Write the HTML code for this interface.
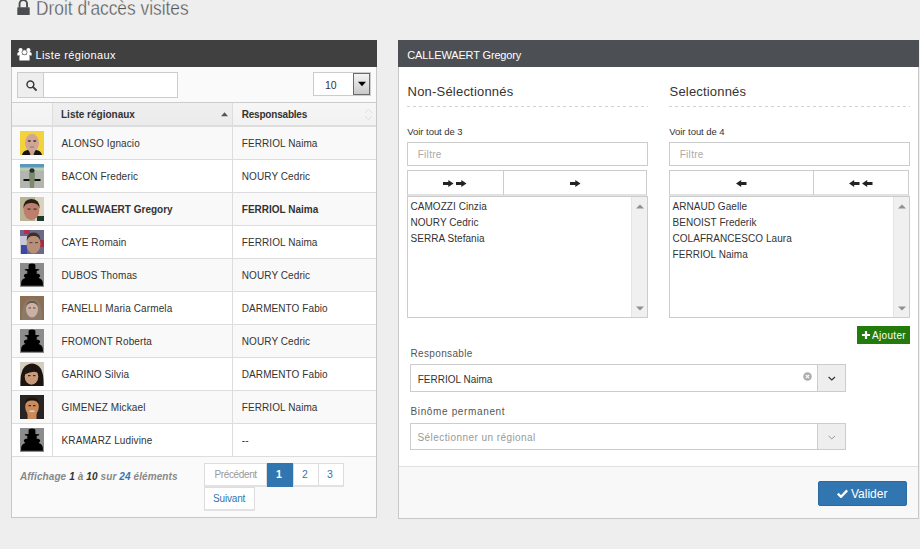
<!DOCTYPE html>
<html><head><meta charset="utf-8"><style>
html,body{margin:0;padding:0}
body{width:920px;height:549px;overflow:hidden;position:relative;background:#eeeeee;font-family:'Liberation Sans', sans-serif}
.t{position:absolute;white-space:nowrap;font-family:'Liberation Sans', sans-serif}
</style></head><body>
<svg style="position:absolute;left:16px;top:-3px" width="16" height="19" viewBox="0 0 16 19"><path d="M3.55 10.5 V6.7 A3.75 3.75 0 0 1 11.05 6.7 V10.5" fill="none" stroke="#4a4c50" stroke-width="1.9"/><rect x="1.3" y="10.2" width="12.4" height="7.8" rx="0.6" fill="#4a4c50"/></svg>
<div class="t" style="left:36.30px;top:-2.40px;font-size:20px;line-height:20px;color:#555;font-weight:normal;font-style:normal;letter-spacing:0px;transform:scaleX(0.867);transform-origin:0 0;-webkit-text-stroke:0.35px #eee">Droit d'accès visites</div>
<div style="position:absolute;left:11px;top:40px;width:366px;height:27px;background:#404040"></div>
<svg style="position:absolute;left:16.5px;top:47.5px" width="15" height="13" viewBox="0 0 15 13" fill="#fff"><circle cx="3.6" cy="2.2" r="2.1"/><circle cx="11.4" cy="2.2" r="2.1"/><path d="M0.4 7.4 V5.6 Q0.4 4 2.4 4 H4.8 Q5.6 4 5.6 5 L4.6 7.4Z"/><path d="M14.6 7.4 V5.6 Q14.6 4 12.6 4 H10.2 Q9.4 4 9.4 5 L10.4 7.4Z"/><path d="M2.4 12.6 V9.4 Q2.4 6.6 5 6.6 H10 Q12.6 6.6 12.6 9.4 V12.6Z"/><circle cx="7.5" cy="4.3" r="2.5" stroke="#404040" stroke-width="0.6"/></svg>
<div class="t" style="left:35.50px;top:49.65px;font-size:11px;line-height:11px;color:#fff;font-weight:normal;font-style:normal;letter-spacing:0.39px;">Liste régionaux</div>
<div style="position:absolute;left:11px;top:67px;width:366px;height:451px;background:#fafafa;border:1px solid #c8c8c8;border-top:none;box-sizing:border-box"></div>
<div style="position:absolute;left:17px;top:72px;width:27px;height:26px;background:#eee;border:1px solid #ccc;box-sizing:border-box"></div>
<div style="position:absolute;left:43px;top:72px;width:135px;height:26px;background:#fff;border:1px solid #ccc;box-sizing:border-box"></div>
<svg style="position:absolute;left:25px;top:79px" width="13" height="13" viewBox="0 0 13 13"><circle cx="5.4" cy="5.4" r="3.4" fill="none" stroke="#3a3a3a" stroke-width="1.5"/><path d="M7.9 7.9 L11 11" stroke="#3a3a3a" stroke-width="1.8" stroke-linecap="round"/></svg>
<div style="position:absolute;left:313px;top:72px;width:58px;height:24px;background:#fff;border:1px solid #ccc;box-sizing:border-box"></div>
<div style="position:absolute;left:353px;top:73px;width:17px;height:22px;background:linear-gradient(#f4f4f4,#c9c9c9);border:1px solid #6b6b6b;box-sizing:border-box"></div>
<svg style="position:absolute;left:357px;top:81px" width="10" height="6" viewBox="0 0 10 6"><path d="M1 0.8 H9 L5 5.2Z" fill="#000"/></svg>
<div class="t" style="left:325.00px;top:79.78px;font-size:10.5px;line-height:10.5px;color:#333;font-weight:normal;font-style:normal;letter-spacing:0px;">10</div>
<div style="position:absolute;left:11px;top:102px;width:366px;height:1px;background:#ccc"></div>
<div style="position:absolute;left:12px;top:103px;width:40px;height:22px;background:linear-gradient(#f6f6f6,#f2f2f2)"></div>
<div style="position:absolute;left:53px;top:103px;width:179px;height:22px;background:linear-gradient(#efefef,#ebebeb)"></div>
<div style="position:absolute;left:233px;top:103px;width:143px;height:22px;background:linear-gradient(#f6f6f6,#f2f2f2)"></div>
<div style="position:absolute;left:12px;top:125px;width:364px;height:2px;background:#ddd"></div>
<div style="position:absolute;left:52px;top:103px;width:1px;height:354px;background:#ddd"></div>
<div style="position:absolute;left:232px;top:103px;width:1px;height:354px;background:#ddd"></div>
<div class="t" style="left:61.00px;top:109.50px;font-size:10px;line-height:10px;color:#333;font-weight:bold;font-style:normal;letter-spacing:0px;">Liste régionaux</div>
<div class="t" style="left:241.70px;top:109.50px;font-size:10px;line-height:10px;color:#333;font-weight:bold;font-style:normal;letter-spacing:-0.2px;">Responsables</div>
<svg style="position:absolute;left:220px;top:111px" width="9" height="6" viewBox="0 0 9 6"><path d="M1 5.2 L4.5 1.2 L8 5.2Z" fill="#555"/></svg>
<svg style="position:absolute;left:364px;top:108px" width="9" height="13" viewBox="0 0 9 13"><path d="M1 5 L4.5 1.2 L8 5 M1 8 L4.5 11.8 L8 8" fill="none" stroke="#ddd" stroke-width="0.9"/></svg>
<div style="position:absolute;left:12px;top:127px;width:40px;height:32px;background:#f9f9f9"></div>
<div style="position:absolute;left:53px;top:127px;width:179px;height:32px;background:#f9f9f9"></div>
<div style="position:absolute;left:233px;top:127px;width:143px;height:32px;background:#f9f9f9"></div>
<div style="position:absolute;left:12px;top:159px;width:364px;height:1px;background:#ddd"></div>
<svg style="position:absolute;left:20px;top:131px" width="24" height="24" viewBox="0 0 24 24"><rect width="24" height="24" fill="#f4d23c"/><path d="M2 24 Q3 19.5 8 19 L16 19 Q21 19.5 22 24Z" fill="#141414"/><ellipse cx="12" cy="11.8" rx="7" ry="9" fill="#cfa596"/><path d="M9 20 L15 20 L13.5 24 L10.5 24Z" fill="#c9a090"/><ellipse cx="9.3" cy="10" rx="1.6" ry="0.9" fill="#5a4038"/><ellipse cx="14.7" cy="10" rx="1.6" ry="0.9" fill="#5a4038"/><rect x="10" y="15.5" width="4" height="1" fill="#9a7068"/></svg>
<div class="t" style="left:61.50px;top:138.50px;font-size:10px;line-height:10px;color:#333;font-weight:normal;font-style:normal;letter-spacing:0.12px;">ALONSO Ignacio</div>
<div class="t" style="left:241.80px;top:138.50px;font-size:10px;line-height:10px;color:#333;font-weight:normal;font-style:normal;letter-spacing:0.08px;">FERRIOL Naima</div>
<div style="position:absolute;left:12px;top:160px;width:40px;height:32px;background:#fff"></div>
<div style="position:absolute;left:53px;top:160px;width:179px;height:32px;background:#fff"></div>
<div style="position:absolute;left:233px;top:160px;width:143px;height:32px;background:#fff"></div>
<div style="position:absolute;left:12px;top:192px;width:364px;height:1px;background:#ddd"></div>
<svg style="position:absolute;left:20px;top:164px" width="24" height="24" viewBox="0 0 24 24"><rect width="24" height="24" fill="#b3b6ae"/><rect width="24" height="5" fill="#5a98bd"/><rect y="3.5" width="24" height="3" fill="#b9d0b0"/><path d="M9.5 6 L14.5 6 L15 11 L14 24 L10 24 L9 11Z" fill="#7b8a6e"/><ellipse cx="12" cy="6.5" rx="2.5" ry="2.2" fill="#2b2b2b"/><rect x="3.5" y="15" width="6" height="2" fill="#111"/><rect x="14.5" y="15" width="6" height="2" fill="#111"/></svg>
<div class="t" style="left:61.50px;top:171.50px;font-size:10px;line-height:10px;color:#333;font-weight:normal;font-style:normal;letter-spacing:0.12px;">BACON Frederic</div>
<div class="t" style="left:241.80px;top:171.50px;font-size:10px;line-height:10px;color:#333;font-weight:normal;font-style:normal;letter-spacing:0.08px;">NOURY Cedric</div>
<div style="position:absolute;left:12px;top:193px;width:40px;height:32px;background:#f9f9f9"></div>
<div style="position:absolute;left:53px;top:193px;width:179px;height:32px;background:#f9f9f9"></div>
<div style="position:absolute;left:233px;top:193px;width:143px;height:32px;background:#f9f9f9"></div>
<div style="position:absolute;left:12px;top:225px;width:364px;height:1px;background:#ddd"></div>
<svg style="position:absolute;left:20px;top:197px" width="24" height="24" viewBox="0 0 24 24"><rect width="24" height="24" fill="#b9b293"/><rect x="15" y="0" width="9" height="24" fill="#d9d3bd"/><rect x="17" y="19" width="7" height="5" fill="#1f3a28"/><ellipse cx="11.5" cy="13.5" rx="7.8" ry="9.5" fill="#bd7f6c"/><path d="M3.5 12 Q3 2 11.5 2 Q20 2 19.5 12 Q18.5 5.5 11.5 6 Q4.5 5.5 3.5 12Z" fill="#2a1e18"/><rect x="7.5" y="11.5" width="3" height="1.2" fill="#4a2a20"/><rect x="13.5" y="11.5" width="3" height="1.2" fill="#4a2a20"/></svg>
<div class="t" style="left:61.50px;top:204.50px;font-size:10px;line-height:10px;color:#333;font-weight:bold;font-style:normal;letter-spacing:0px;">CALLEWAERT Gregory</div>
<div class="t" style="left:241.80px;top:204.50px;font-size:10px;line-height:10px;color:#333;font-weight:bold;font-style:normal;letter-spacing:0px;">FERRIOL Naima</div>
<div style="position:absolute;left:12px;top:226px;width:40px;height:32px;background:#fff"></div>
<div style="position:absolute;left:53px;top:226px;width:179px;height:32px;background:#fff"></div>
<div style="position:absolute;left:233px;top:226px;width:143px;height:32px;background:#fff"></div>
<div style="position:absolute;left:12px;top:258px;width:364px;height:1px;background:#ddd"></div>
<svg style="position:absolute;left:20px;top:230px" width="24" height="24" viewBox="0 0 24 24"><rect width="24" height="24" fill="#6a6a88"/><rect x="0" y="6" width="7" height="18" fill="#c8c8d8"/><rect x="1" y="15" width="6" height="9" fill="#3a4aa0"/><rect x="20" y="10" width="4" height="7" fill="#a03040"/><rect x="4" y="0" width="6" height="4" fill="#b03050"/><ellipse cx="13.5" cy="14" rx="7" ry="9.5" fill="#b89078"/><path d="M6.5 11 Q6.5 2.5 13.5 2.5 Q20.5 2.5 20.5 11 Q18.5 5.5 13.5 6 Q8.5 5.5 6.5 11Z" fill="#3a3028"/><rect x="9.5" y="12" width="3" height="1.2" fill="#5a4a40"/><rect x="15" y="12" width="3" height="1.2" fill="#5a4a40"/></svg>
<div class="t" style="left:61.50px;top:237.50px;font-size:10px;line-height:10px;color:#333;font-weight:normal;font-style:normal;letter-spacing:0.12px;">CAYE Romain</div>
<div class="t" style="left:241.80px;top:237.50px;font-size:10px;line-height:10px;color:#333;font-weight:normal;font-style:normal;letter-spacing:0.08px;">FERRIOL Naima</div>
<div style="position:absolute;left:12px;top:259px;width:40px;height:32px;background:#f9f9f9"></div>
<div style="position:absolute;left:53px;top:259px;width:179px;height:32px;background:#f9f9f9"></div>
<div style="position:absolute;left:233px;top:259px;width:143px;height:32px;background:#f9f9f9"></div>
<div style="position:absolute;left:12px;top:291px;width:364px;height:1px;background:#ddd"></div>
<svg style="position:absolute;left:20px;top:263px" width="24" height="24" viewBox="0 0 24 24"><rect width="24" height="24" fill="#8c8c8c"/><path fill="#000" d="M8.6 6 V2.2 Q8.6 0.4 12 0.4 Q15.4 0.4 15.4 2.2 V6 L19 6.2 Q20.3 7 17 7.7 L16.6 8.6 Q17.2 9.8 16.4 10.4 Q20.2 11 20.2 12.6 Q20.2 14 18.6 14.9 Q22.6 16 22.8 19.5 L23 22.8 L1 22.8 L1.2 19.5 Q1.4 16 5.4 14.9 Q3.8 14 3.8 12.6 Q3.8 11 7.6 10.4 Q6.8 9.8 7.4 8.6 L7 7.7 Q3.7 7 5 6.2Z"/></svg>
<div class="t" style="left:61.50px;top:270.50px;font-size:10px;line-height:10px;color:#333;font-weight:normal;font-style:normal;letter-spacing:0.12px;">DUBOS Thomas</div>
<div class="t" style="left:241.80px;top:270.50px;font-size:10px;line-height:10px;color:#333;font-weight:normal;font-style:normal;letter-spacing:0.08px;">NOURY Cedric</div>
<div style="position:absolute;left:12px;top:292px;width:40px;height:32px;background:#fff"></div>
<div style="position:absolute;left:53px;top:292px;width:179px;height:32px;background:#fff"></div>
<div style="position:absolute;left:233px;top:292px;width:143px;height:32px;background:#fff"></div>
<div style="position:absolute;left:12px;top:324px;width:364px;height:1px;background:#ddd"></div>
<svg style="position:absolute;left:20px;top:296px" width="24" height="24" viewBox="0 0 24 24"><rect width="24" height="24" fill="#8c6e52"/><path d="M2 24 Q1 3 12 2.5 Q23 3 22 24Z" fill="#8a7a6a"/><ellipse cx="12" cy="13" rx="6" ry="8.5" fill="#cdb0a4"/><path d="M6 11 Q6.5 4.5 12 4.5 Q17.5 4.5 18 11 Q16 6.5 12 7 Q8 6.5 6 11Z" fill="#6a5a4a"/><rect x="8.5" y="11.5" width="2.5" height="1" fill="#5a4a40"/><rect x="13" y="11.5" width="2.5" height="1" fill="#5a4a40"/></svg>
<div class="t" style="left:61.50px;top:303.50px;font-size:10px;line-height:10px;color:#333;font-weight:normal;font-style:normal;letter-spacing:0.12px;">FANELLI Maria Carmela</div>
<div class="t" style="left:241.80px;top:303.50px;font-size:10px;line-height:10px;color:#333;font-weight:normal;font-style:normal;letter-spacing:0.08px;">DARMENTO Fabio</div>
<div style="position:absolute;left:12px;top:325px;width:40px;height:32px;background:#f9f9f9"></div>
<div style="position:absolute;left:53px;top:325px;width:179px;height:32px;background:#f9f9f9"></div>
<div style="position:absolute;left:233px;top:325px;width:143px;height:32px;background:#f9f9f9"></div>
<div style="position:absolute;left:12px;top:357px;width:364px;height:1px;background:#ddd"></div>
<svg style="position:absolute;left:20px;top:329px" width="24" height="24" viewBox="0 0 24 24"><rect width="24" height="24" fill="#8c8c8c"/><path fill="#000" d="M8.6 6 V2.2 Q8.6 0.4 12 0.4 Q15.4 0.4 15.4 2.2 V6 L19 6.2 Q20.3 7 17 7.7 L16.6 8.6 Q17.2 9.8 16.4 10.4 Q20.2 11 20.2 12.6 Q20.2 14 18.6 14.9 Q22.6 16 22.8 19.5 L23 22.8 L1 22.8 L1.2 19.5 Q1.4 16 5.4 14.9 Q3.8 14 3.8 12.6 Q3.8 11 7.6 10.4 Q6.8 9.8 7.4 8.6 L7 7.7 Q3.7 7 5 6.2Z"/></svg>
<div class="t" style="left:61.50px;top:336.50px;font-size:10px;line-height:10px;color:#333;font-weight:normal;font-style:normal;letter-spacing:0.12px;">FROMONT Roberta</div>
<div class="t" style="left:241.80px;top:336.50px;font-size:10px;line-height:10px;color:#333;font-weight:normal;font-style:normal;letter-spacing:0.08px;">NOURY Cedric</div>
<div style="position:absolute;left:12px;top:358px;width:40px;height:32px;background:#fff"></div>
<div style="position:absolute;left:53px;top:358px;width:179px;height:32px;background:#fff"></div>
<div style="position:absolute;left:233px;top:358px;width:143px;height:32px;background:#fff"></div>
<div style="position:absolute;left:12px;top:390px;width:364px;height:1px;background:#ddd"></div>
<svg style="position:absolute;left:20px;top:362px" width="24" height="24" viewBox="0 0 24 24"><rect width="24" height="24" fill="#d4ccbc"/><path d="M0.5 24 Q-0.5 2 12 1.5 Q24.5 2 23.5 24Z" fill="#1c1410"/><ellipse cx="11.5" cy="14.5" rx="6.8" ry="8.3" fill="#c99a7a"/><path d="M4.5 12.5 Q6 5.5 13 5.5 Q19 6.5 19.5 12 Q15 7.5 4.5 12.5Z" fill="#1c1410"/><rect x="8" y="13" width="2.5" height="1.2" fill="#3a2a20"/><rect x="13" y="13" width="2.5" height="1.2" fill="#3a2a20"/></svg>
<div class="t" style="left:61.50px;top:369.50px;font-size:10px;line-height:10px;color:#333;font-weight:normal;font-style:normal;letter-spacing:0.12px;">GARINO Silvia</div>
<div class="t" style="left:241.80px;top:369.50px;font-size:10px;line-height:10px;color:#333;font-weight:normal;font-style:normal;letter-spacing:0.08px;">DARMENTO Fabio</div>
<div style="position:absolute;left:12px;top:391px;width:40px;height:32px;background:#f9f9f9"></div>
<div style="position:absolute;left:53px;top:391px;width:179px;height:32px;background:#f9f9f9"></div>
<div style="position:absolute;left:233px;top:391px;width:143px;height:32px;background:#f9f9f9"></div>
<div style="position:absolute;left:12px;top:423px;width:364px;height:1px;background:#ddd"></div>
<svg style="position:absolute;left:20px;top:395px" width="24" height="24" viewBox="0 0 24 24"><rect width="24" height="24" fill="#2a2323"/><rect x="7.5" y="17" width="9" height="7" fill="#c68a5c"/><ellipse cx="12" cy="12" rx="6.8" ry="8.8" fill="#c98b5c"/><path d="M5 9.5 Q5 2.5 12 2.5 Q19 2.5 19 9.5 Q17 5 12 5.5 Q7 5 5 9.5Z" fill="#1a1410"/><rect x="8.5" y="10" width="2.5" height="1.2" fill="#3a2418"/><rect x="13" y="10" width="2.5" height="1.2" fill="#3a2418"/><rect x="9.5" y="15.5" width="5" height="1.3" fill="#eedccc"/></svg>
<div class="t" style="left:61.50px;top:402.50px;font-size:10px;line-height:10px;color:#333;font-weight:normal;font-style:normal;letter-spacing:0.12px;">GIMENEZ Mickael</div>
<div class="t" style="left:241.80px;top:402.50px;font-size:10px;line-height:10px;color:#333;font-weight:normal;font-style:normal;letter-spacing:0.08px;">FERRIOL Naima</div>
<div style="position:absolute;left:12px;top:424px;width:40px;height:32px;background:#fff"></div>
<div style="position:absolute;left:53px;top:424px;width:179px;height:32px;background:#fff"></div>
<div style="position:absolute;left:233px;top:424px;width:143px;height:32px;background:#fff"></div>
<div style="position:absolute;left:12px;top:456px;width:364px;height:1px;background:#ddd"></div>
<svg style="position:absolute;left:20px;top:428px" width="24" height="24" viewBox="0 0 24 24"><rect width="24" height="24" fill="#8c8c8c"/><path fill="#000" d="M8.6 6 V2.2 Q8.6 0.4 12 0.4 Q15.4 0.4 15.4 2.2 V6 L19 6.2 Q20.3 7 17 7.7 L16.6 8.6 Q17.2 9.8 16.4 10.4 Q20.2 11 20.2 12.6 Q20.2 14 18.6 14.9 Q22.6 16 22.8 19.5 L23 22.8 L1 22.8 L1.2 19.5 Q1.4 16 5.4 14.9 Q3.8 14 3.8 12.6 Q3.8 11 7.6 10.4 Q6.8 9.8 7.4 8.6 L7 7.7 Q3.7 7 5 6.2Z"/></svg>
<div class="t" style="left:61.50px;top:435.50px;font-size:10px;line-height:10px;color:#333;font-weight:normal;font-style:normal;letter-spacing:0.12px;">KRAMARZ Ludivine</div>
<div class="t" style="left:241.80px;top:435.50px;font-size:10px;line-height:10px;color:#333;font-weight:normal;font-style:normal;letter-spacing:0.08px;">--</div>
<div class="t" style="left:20.00px;top:471.50px;font-size:10px;line-height:10px;color:#333;font-weight:bold;font-style:italic;letter-spacing:0.1px;"><span style="color:#888">Affichage</span> <span style="color:#333">1</span> <span style="color:#888">à</span> <span style="color:#333">10</span> <span style="color:#888">sur</span> <span style="color:#3276b1">24</span> <span style="color:#888">éléments</span></div>
<div style="position:absolute;left:204px;top:463px;width:63px;height:24px;background:#fff;border:1px solid #ddd;border-bottom:2px solid #e2e2e2;box-sizing:border-box"></div>
<div style="position:absolute;left:267px;top:463px;width:26px;height:24px;background:#3276b1"></div>
<div style="position:absolute;left:293px;top:463px;width:26px;height:24px;background:#fff;border:1px solid #ddd;border-bottom:2px solid #e2e2e2;box-sizing:border-box"></div>
<div style="position:absolute;left:318px;top:463px;width:26px;height:24px;background:#fff;border:1px solid #ddd;border-bottom:2px solid #e2e2e2;box-sizing:border-box"></div>
<div style="position:absolute;left:204px;top:487px;width:51px;height:24px;background:#fff;border:1px solid #ddd;border-bottom:2px solid #e2e2e2;box-sizing:border-box"></div>
<div class="t" style="left:214.50px;top:469.50px;font-size:10px;line-height:10px;color:#999;font-weight:normal;font-style:normal;letter-spacing:-0.37px;">Précédent</div>
<div class="t" style="left:276.00px;top:469.07px;font-size:10.5px;line-height:10.5px;color:#fff;font-weight:bold;font-style:normal;letter-spacing:0px;">1</div>
<div class="t" style="left:302.00px;top:469.07px;font-size:10.5px;line-height:10.5px;color:#3276b1;font-weight:normal;font-style:normal;letter-spacing:0px;">2</div>
<div class="t" style="left:327.00px;top:469.07px;font-size:10.5px;line-height:10.5px;color:#3276b1;font-weight:normal;font-style:normal;letter-spacing:0px;">3</div>
<div class="t" style="left:213.00px;top:493.50px;font-size:10px;line-height:10px;color:#3276b1;font-weight:normal;font-style:normal;letter-spacing:-0.17px;">Suivant</div>
<div style="position:absolute;left:398px;top:40px;width:521px;height:27px;background:#4c4f53"></div>
<div class="t" style="left:407.30px;top:49.65px;font-size:11px;line-height:11px;color:#fff;font-weight:normal;font-style:normal;letter-spacing:-0.15px;">CALLEWAERT Gregory</div>
<div style="position:absolute;left:398px;top:67px;width:521px;height:452px;background:#fff;border:1px solid #c8c8c8;border-top:none;box-sizing:border-box"></div>
<div style="position:absolute;left:399px;top:467px;width:519px;height:51px;background:#f8f8f8"></div>
<div style="position:absolute;left:399px;top:466px;width:519px;height:1px;background:#e0e0e0"></div>
<div class="t" style="left:407.60px;top:84.95px;font-size:13px;line-height:13px;color:#333;font-weight:normal;font-style:normal;letter-spacing:0.2px;">Non-Sélectionnés</div>
<div style="position:absolute;left:407px;top:106px;width:241px;height:1px;background:repeating-linear-gradient(90deg,#d2d2d2 0 3px,transparent 3px 6px)"></div>
<div class="t" style="left:407.30px;top:126.92px;font-size:9.5px;line-height:9.5px;color:#333;font-weight:normal;font-style:normal;letter-spacing:-0.05px;">Voir tout de 3</div>
<div style="position:absolute;left:407px;top:142px;width:241px;height:24px;background:#fff;border:1px solid #ccc;box-sizing:border-box"></div>
<div class="t" style="left:417.70px;top:149.50px;font-size:10px;line-height:10px;color:#aaa;font-weight:normal;font-style:normal;letter-spacing:0.3px;">Filtre</div>
<div style="position:absolute;left:407px;top:170px;width:97px;height:26px;background:#fff;border:1px solid #ccc;border-bottom:2px solid #e2e2e2;box-sizing:border-box"></div>
<div style="position:absolute;left:503px;top:170px;width:144px;height:26px;background:#fff;border:1px solid #ccc;border-bottom:2px solid #e2e2e2;box-sizing:border-box"></div>
<div style="position:absolute;left:407px;top:196px;width:241px;height:122px;background:#fff;border:1px solid #ccc;box-sizing:border-box"></div>
<div style="position:absolute;left:631px;top:197px;width:16px;height:120px;background:#f0f0f0;border-left:1px solid #e4e4e4;box-sizing:border-box"></div>
<svg style="position:absolute;left:636px;top:204px" width="8" height="5" viewBox="0 0 8 5"><path d="M0 4.5 L4 0.5 L8 4.5Z" fill="#909090"/></svg>
<svg style="position:absolute;left:636px;top:306px" width="8" height="5" viewBox="0 0 8 5"><path d="M0 0.5 L4 4.5 L8 0.5Z" fill="#909090"/></svg>
<div class="t" style="left:410.50px;top:201.70px;font-size:10px;line-height:10px;color:#333;font-weight:normal;font-style:normal;letter-spacing:0.05px;">CAMOZZI Cinzia</div>
<div class="t" style="left:410.50px;top:217.70px;font-size:10px;line-height:10px;color:#333;font-weight:normal;font-style:normal;letter-spacing:0.05px;">NOURY Cedric</div>
<div class="t" style="left:410.50px;top:233.70px;font-size:10px;line-height:10px;color:#333;font-weight:normal;font-style:normal;letter-spacing:0.05px;">SERRA Stefania</div>
<svg style="position:absolute;left:443px;top:180px" width="24" height="8" viewBox="0 0 24 8"><path d="M0 2.0 H5.3 V0 L10.5 3.5 L5.3 7 V5.0 H0Z" fill="#222"/><g transform="translate(13,0)"><path d="M0 2.0 H5.3 V0 L10.5 3.5 L5.3 7 V5.0 H0Z" fill="#222"/></g></svg>
<svg style="position:absolute;left:570px;top:180px" width="11" height="8" viewBox="0 0 11 8"><path d="M0 2.0 H5.3 V0 L10.5 3.5 L5.3 7 V5.0 H0Z" fill="#222"/></svg>
<div class="t" style="left:669.60px;top:84.95px;font-size:13px;line-height:13px;color:#333;font-weight:normal;font-style:normal;letter-spacing:0.18px;">Selectionnés</div>
<div style="position:absolute;left:669px;top:106px;width:241px;height:1px;background:repeating-linear-gradient(90deg,#d2d2d2 0 3px,transparent 3px 6px)"></div>
<div class="t" style="left:669.30px;top:126.92px;font-size:9.5px;line-height:9.5px;color:#333;font-weight:normal;font-style:normal;letter-spacing:-0.05px;">Voir tout de 4</div>
<div style="position:absolute;left:669px;top:142px;width:241px;height:24px;background:#fff;border:1px solid #ccc;box-sizing:border-box"></div>
<div class="t" style="left:679.70px;top:149.50px;font-size:10px;line-height:10px;color:#aaa;font-weight:normal;font-style:normal;letter-spacing:0.3px;">Filtre</div>
<div style="position:absolute;left:669px;top:170px;width:145px;height:26px;background:#fff;border:1px solid #ccc;border-bottom:2px solid #e2e2e2;box-sizing:border-box"></div>
<div style="position:absolute;left:813px;top:170px;width:96px;height:26px;background:#fff;border:1px solid #ccc;border-bottom:2px solid #e2e2e2;box-sizing:border-box"></div>
<div style="position:absolute;left:669px;top:196px;width:241px;height:122px;background:#fff;border:1px solid #ccc;box-sizing:border-box"></div>
<div style="position:absolute;left:893px;top:197px;width:16px;height:120px;background:#f0f0f0;border-left:1px solid #e4e4e4;box-sizing:border-box"></div>
<svg style="position:absolute;left:898px;top:204px" width="8" height="5" viewBox="0 0 8 5"><path d="M0 4.5 L4 0.5 L8 4.5Z" fill="#909090"/></svg>
<svg style="position:absolute;left:898px;top:306px" width="8" height="5" viewBox="0 0 8 5"><path d="M0 0.5 L4 4.5 L8 0.5Z" fill="#909090"/></svg>
<div class="t" style="left:672.50px;top:201.70px;font-size:10px;line-height:10px;color:#333;font-weight:normal;font-style:normal;letter-spacing:0.05px;">ARNAUD Gaelle</div>
<div class="t" style="left:672.50px;top:217.70px;font-size:10px;line-height:10px;color:#333;font-weight:normal;font-style:normal;letter-spacing:0.05px;">BENOIST Frederik</div>
<div class="t" style="left:672.50px;top:233.70px;font-size:10px;line-height:10px;color:#333;font-weight:normal;font-style:normal;letter-spacing:0.05px;">COLAFRANCESCO Laura</div>
<div class="t" style="left:672.50px;top:249.70px;font-size:10px;line-height:10px;color:#333;font-weight:normal;font-style:normal;letter-spacing:0.05px;">FERRIOL Naima</div>
<svg style="position:absolute;left:736px;top:180px" width="11" height="8" viewBox="0 0 11 8"><path d="M10.5 2.0 H5.2 V0 L0 3.5 L5.2 7 V5.0 H10.5Z" fill="#222"/></svg>
<svg style="position:absolute;left:849px;top:180px" width="24" height="8" viewBox="0 0 24 8"><path d="M10.5 2.0 H5.2 V0 L0 3.5 L5.2 7 V5.0 H10.5Z" fill="#222"/><g transform="translate(13,0)"><path d="M10.5 2.0 H5.2 V0 L0 3.5 L5.2 7 V5.0 H10.5Z" fill="#222"/></g></svg>
<div style="position:absolute;left:857px;top:326px;width:53px;height:18px;background:#237b0c"></div>
<svg style="position:absolute;left:862px;top:331px" width="8" height="8" viewBox="0 0 8 8"><path d="M2.9 0 H5.1 V2.9 H8 V5.1 H5.1 V8 H2.9 V5.1 H0 V2.9 H2.9Z" fill="#fff"/></svg>
<div class="t" style="left:872.00px;top:330.50px;font-size:10px;line-height:10px;color:#fff;font-weight:normal;font-style:normal;letter-spacing:0.33px;">Ajouter</div>
<div class="t" style="left:410.50px;top:348.50px;font-size:10px;line-height:10px;color:#555;font-weight:normal;font-style:normal;letter-spacing:0.35px;">Responsable</div>
<div style="position:absolute;left:410px;top:364px;width:436px;height:28px;background:#fff;border:1px solid #ccc;box-sizing:border-box"></div>
<div style="position:absolute;left:817px;top:364px;width:29px;height:28px;background:#eee;border:1px solid #ccc;box-sizing:border-box"></div>
<div class="t" style="left:417.70px;top:374.50px;font-size:10px;line-height:10px;color:#333;font-weight:normal;font-style:normal;letter-spacing:0px;">FERRIOL Naima</div>
<svg style="position:absolute;left:802.5px;top:371.5px" width="9" height="9" viewBox="0 0 9 9"><circle cx="4.5" cy="4.5" r="4.3" fill="#adadad"/><path d="M2.8 2.8 L6.2 6.2 M6.2 2.8 L2.8 6.2" stroke="#fff" stroke-width="1.1"/></svg>
<svg style="position:absolute;left:828px;top:376px" width="8" height="5" viewBox="0 0 8 5"><path d="M0.6 1 L3.8 3.9 L7 1" fill="none" stroke="#333" stroke-width="1.2"/></svg>
<div class="t" style="left:410.50px;top:406.50px;font-size:10px;line-height:10px;color:#555;font-weight:normal;font-style:normal;letter-spacing:0.64px;">Binôme permanent</div>
<div style="position:absolute;left:410px;top:423px;width:436px;height:27px;background:#fff;border:1px solid #ccc;box-sizing:border-box"></div>
<div style="position:absolute;left:817px;top:423px;width:29px;height:27px;background:#eee;border:1px solid #ccc;box-sizing:border-box"></div>
<div class="t" style="left:417.50px;top:432.70px;font-size:10px;line-height:10px;color:#999;font-weight:normal;font-style:normal;letter-spacing:0.43px;">Sélectionner un régional</div>
<svg style="position:absolute;left:828px;top:435px" width="8" height="5" viewBox="0 0 8 5"><path d="M0.6 1 L3.8 3.9 L7 1" fill="none" stroke="#999" stroke-width="1"/></svg>
<div style="position:absolute;left:818px;top:481px;width:89px;height:25px;background:#3276b1;border:1px solid #2c699d;border-radius:2px;box-sizing:border-box"></div>
<svg style="position:absolute;left:837px;top:489px" width="11" height="9" viewBox="0 0 11 9"><path d="M0.8 4.6 L4 7.8 L10.2 1.4" fill="none" stroke="#fff" stroke-width="2.3"/></svg>
<div class="t" style="left:851.00px;top:487.50px;font-size:12px;line-height:12px;color:#fff;font-weight:normal;font-style:normal;letter-spacing:0px;">Valider</div>
</body></html>
